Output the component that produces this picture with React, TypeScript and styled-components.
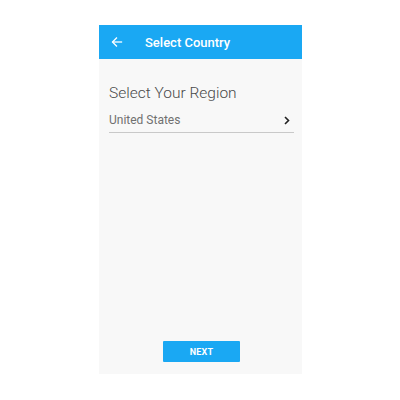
import styled, { createGlobalStyle } from "styled-components";

const GlobalStyle = createGlobalStyle`
  html, body {
    margin: 0;
    padding: 0;
    background: #ffffff;
    font-family: Roboto, "Liberation Sans", sans-serif;
  }
`;

const Page = styled.div`
  width: 400px;
  height: 400px;
  padding: 25px 0 0 99px;
  box-sizing: border-box;
`;

const Screen = styled.div`
  width: 203px;
  height: 349px;
  background: #f8f8f8;
  display: flex;
  flex-direction: column;
`;

const Header = styled.div`
  height: 34px;
  background: #1aa8f3;
  display: flex;
  align-items: center;
  padding-left: 12px;
  gap: 22px;
  color: #ffffff;
`;

const BackButton = styled.button`
  border: 0;
  background: none;
  padding: 0;
  display: flex;
  color: inherit;
`;

const HeaderTitle = styled.span`
  font-size: 13px;
  font-weight: 500;
`;

const Content = styled.div`
  flex: 1;
  display: flex;
  flex-direction: column;
  padding: 24px 8px 0 10px;
`;

const RegionTitle = styled.div`
  font-size: 15.5px;
  font-weight: 300;
  color: #4a4a4a;
  line-height: 20px;
`;

const Picker = styled.div`
  margin-top: 5px;
  height: 24px;
  display: flex;
  align-items: center;
  justify-content: space-between;
  border-bottom: 1.5px solid #c9c9c9;
  padding-right: 4px;
`;

const PickerValue = styled.span`
  font-size: 12px;
  color: #707070;
`;

const Footer = styled.div`
  display: flex;
  justify-content: center;
  padding: 0 0 12px 2px;
`;

const NextButton = styled.button`
  width: 77px;
  height: 21px;
  border: 0;
  border-radius: 1px;
  background: #1aa8f3;
  color: #ffffff;
  font-family: Roboto, "Liberation Sans", sans-serif;
  font-size: 9px;
  font-weight: 700;
  letter-spacing: 0.2px;
`;

export default function App() {
  return (
    <>
      <GlobalStyle />
      <Page>
        <Screen>
          <Header>
            <BackButton>
              <svg width="12" height="12" viewBox="0 0 24 24" fill="none" stroke="currentColor" strokeWidth="2.6" strokeLinecap="square">
                <path d="M21 12H4" />
                <path d="M11 4l-8 8 8 8" />
              </svg>
            </BackButton>
            <HeaderTitle>Select Country</HeaderTitle>
          </Header>
          <Content>
            <RegionTitle>Select Your Region</RegionTitle>
            <Picker>
              <PickerValue>United States</PickerValue>
              <svg width="6" height="9" viewBox="0 0 6 9" fill="none" stroke="#222" strokeWidth="1.6">
                <path d="M1 1l3.5 3.5L1 8" />
              </svg>
            </Picker>
          </Content>
          <Footer>
            <NextButton>NEXT</NextButton>
          </Footer>
        </Screen>
      </Page>
    </>
  );
}
